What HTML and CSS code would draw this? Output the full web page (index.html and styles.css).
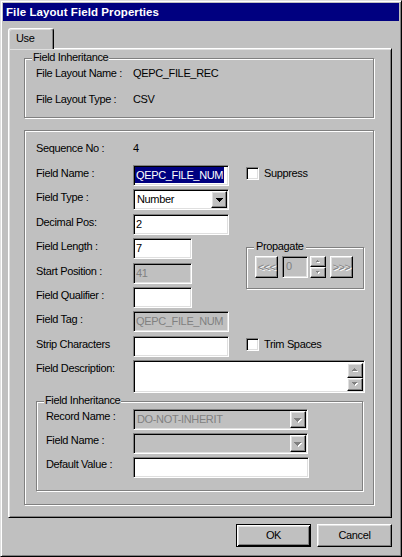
FILE: index.html
```html
<!DOCTYPE html>
<html>
<head>
<meta charset="utf-8">
<title>File Layout Field Properties</title>
<link rel="stylesheet" href="styles.css">
</head>
<body>
<div class="window">
  <div class="titlebar">File Layout Field Properties</div>
  <div class="client">
    <div class="tabstrip"><div class="tab">Use</div></div>
    <div class="panel">
      <div class="group g1">
        <span class="legend">Field Inheritance</span>
        <div class="info">
          <span>File Layout Name :</span><span>QEPC_FILE_REC</span>
          <span>File Layout Type :</span><span>CSV</span>
        </div>
      </div>

      <div class="group g2">
        <div class="form">
          <span class="lbl">Sequence No :</span>
          <span class="ctl val">4</span>

          <span class="lbl">Field Name :</span>
          <div class="ctl sunken edit w96 selwrap"><span class="sel">QEPC_FILE_NUM</span></div>
          <div class="side check"><span class="sunken box"></span><span>Suppress</span></div>

          <span class="lbl">Field Type :</span>
          <div class="ctl sunken combo w96"><span class="ctext">Number</span><span class="raised dropbtn"><svg width="7" height="4" viewBox="0 0 7 4" shape-rendering="crispEdges"><path d="M0 0h7v1H0zM1 1h5v1H1zM2 2h3v1H2zM3 3h1v1H3z" fill="#000"/></svg></span></div>

          <span class="lbl">Decimal Pos:</span>
          <div class="ctl sunken edit w96">2</div>

          <span class="lbl">Field Length :</span>
          <div class="ctl sunken edit w59">7</div>

          <div class="group prop">
            <span class="legend">Propagate</span>
            <div class="proprow">
              <span class="raised pbtn dis">&lt;&lt;&lt;</span>
              <span class="sunken pedit dis">0</span>
              <span class="spin">
                <span class="raised sbtn"><svg width="4" height="3" viewBox="0 0 4 3" shape-rendering="crispEdges"><path transform="translate(1 1)" fill="#fff" d="M1 0h1v1H1zM0 1h3v1H0z"/><path fill="#808080" d="M1 0h1v1H1zM0 1h3v1H0z"/></svg></span>
                <span class="raised sbtn"><svg width="4" height="3" viewBox="0 0 4 3" shape-rendering="crispEdges"><path transform="translate(1 1)" fill="#fff" d="M0 0h3v1H0zM1 1h1v1H1z"/><path fill="#808080" d="M0 0h3v1H0zM1 1h1v1H1z"/></svg></span>
              </span>
              <span class="raised pbtn dis">&gt;&gt;&gt;</span>
            </div>
          </div>

          <span class="lbl">Start Position :</span>
          <div class="ctl sunken edit w59 disabled">41</div>

          <span class="lbl">Field Qualifier :</span>
          <div class="ctl sunken edit w59"></div>

          <span class="lbl">Field Tag :</span>
          <div class="ctl sunken edit w96 disabled">QEPC_FILE_NUM</div>

          <span class="lbl">Strip Characters</span>
          <div class="ctl sunken edit w96"></div>
          <div class="side check"><span class="sunken box"></span><span>Trim Spaces</span></div>

          <span class="lbl">Field Description:</span>
          <div class="wide sunken memo">
            <div class="memotext"></div>
            <div class="vscroll">
              <span class="raised vbtn up"><svg width="6" height="4" viewBox="0 0 6 4" shape-rendering="crispEdges"><path transform="translate(1 1)" fill="#fff" d="M2 0h1v1H2zM1 1h3v1H1zM0 2h5v1H0z"/><path fill="#808080" d="M2 0h1v1H2zM1 1h3v1H1zM0 2h5v1H0z"/></svg></span>
              <span class="raised vbtn dn"><svg width="6" height="4" viewBox="0 0 6 4" shape-rendering="crispEdges"><path transform="translate(1 1)" fill="#fff" d="M0 0h5v1H0zM1 1h3v1H1zM2 2h1v1H2z"/><path fill="#808080" d="M0 0h5v1H0zM1 1h3v1H1zM2 2h1v1H2z"/></svg></span>
            </div>
          </div>
        </div>

        <div class="group g3">
          <span class="legend">Field Inheritance</span>
          <div class="form2">
            <span class="lbl2">Record Name :</span>
            <div class="sunken combo w175 disabled"><span class="ctext">DO-NOT-INHERIT</span><span class="raised dropbtn"><svg width="8" height="5" viewBox="0 0 8 5" shape-rendering="crispEdges"><path transform="translate(1 1)" fill="#fff" d="M0 0h7v1H0zM1 1h5v1H1zM2 2h3v1H2zM3 3h1v1H3z"/><path fill="#808080" d="M0 0h7v1H0zM1 1h5v1H1zM2 2h3v1H2zM3 3h1v1H3z"/></svg></span></div>

            <span class="lbl2">Field Name :</span>
            <div class="sunken combo w175 disabled"><span class="ctext"></span><span class="raised dropbtn"><svg width="8" height="5" viewBox="0 0 8 5" shape-rendering="crispEdges"><path transform="translate(1 1)" fill="#fff" d="M0 0h7v1H0zM1 1h5v1H1zM2 2h3v1H2zM3 3h1v1H3z"/><path fill="#808080" d="M0 0h7v1H0zM1 1h5v1H1zM2 2h3v1H2zM3 3h1v1H3z"/></svg></span></div>

            <span class="lbl2">Default Value :</span>
            <div class="sunken edit w176"></div>
          </div>
        </div>
      </div>
    </div>
    <div class="buttons">
      <span class="btn default">OK</span>
      <span class="btn raised">Cancel</span>
    </div>
  </div>
</div>
</body>
</html>
```
FILE: styles.css
```css
* { box-sizing: border-box; margin: 0; padding: 0; }
html, body { margin: 0; background: #c0c0c0; }
body {
  font: 11px/13px "Liberation Sans", Arial, sans-serif;
  letter-spacing: -0.35px;
  color: #000;
}

.window {
  width: 402px;
  height: 557px;
  border: 1px solid;
  border-color: #dfdfdf #000 #000 #dfdfdf;
  box-shadow: inset 1px 1px #fff, inset -1px -1px #808080;
  padding: 2px;
  display: flex;
  flex-direction: column;
  background: #c0c0c0;
}

.titlebar {
  height: 18px;
  flex: none;
  background: #000080;
  color: #fff;
  font-weight: bold;
  font-size: 11.5px;
  line-height: 18px;
  letter-spacing: 0.08px;
  padding-left: 3px;
  white-space: nowrap;
}

.client {
  flex: 1;
  display: flex;
  flex-direction: column;
  padding: 7px 7px 0 5px;
}

/* 3D helpers */
.raised {
  background: #c0c0c0;
  border: 1px solid;
  border-color: #fff #000 #000 #fff;
  box-shadow: inset -1px -1px #808080, inset 1px 1px #dfdfdf;
}
.sunken {
  background: #fff;
  border: 1px solid;
  border-color: #808080 #fff #fff #808080;
  box-shadow: inset 1px 1px #000, inset -1px -1px #dfdfdf;
}

/* tabs */
.tabstrip {
  height: 20px;
  display: flex;
  align-items: flex-end;
}
.tab {
  position: relative;
  z-index: 1;
  width: 46px;
  height: 21px;
  margin-bottom: -1px;
  background: #c0c0c0;
  border: 1px solid;
  border-bottom: none;
  border-color: #fff #000 transparent #fff;
  border-radius: 3px 3px 0 0;
  box-shadow: inset -1px 0 #808080, inset 1px 1px #dfdfdf;
  padding: 3px 0 0 7px;
}

.panel {
  width: 384px;
  height: 470px;
  border: 1px solid;
  border-color: #fff #000 #000 #fff;
  box-shadow: inset 1px 1px #dfdfdf, inset -1px -1px #808080;
  padding: 9px 0 0 15px;
}

/* group boxes (etched) */
.group {
  position: relative;
  border: 1px solid #808080;
  box-shadow: inset 1px 1px #fff, 1px 1px #fff;
}
.legend {
  position: absolute;
  top: -8px;
  left: 7px;
  padding: 0 1px;
  background: #c0c0c0;
  white-space: nowrap;
}

.g1 {
  width: 350px;
  height: 60px;
  padding: 8px 0 0 11px;
}
.info {
  display: grid;
  grid-template-columns: 97px auto;
  row-gap: 13px;
}

.g2 {
  width: 350px;
  height: 375px;
  margin-top: 12px;
  padding: 9px 0 0 11px;
}
.form {
  display: grid;
  grid-template-columns: 97px 113px 118px;
  grid-template-rows: 25px repeat(8, 24.4px) 33px;
}
.lbl { grid-column: 1; padding-top: 2px; white-space: nowrap; }
.ctl { grid-column: 2; }
.val { padding-top: 2px; }
.side { grid-column: 3; }
.wide { grid-column: 2 / 4; }

.edit {
  height: 21px;
  padding: 3px 2px 0;
  white-space: nowrap;
  overflow: hidden;
}
.w96 { width: 96px; }
.w59 { width: 59px; }
.w175 { width: 175px; }
.w176 { width: 176px; }
.disabled { background: #c0c0c0; color: #808080; }

.selwrap { padding: 1px 1px 0; }
.sel {
  display: inline-block;
  height: 16px;
  line-height: 16px;
  padding: 0 1px;
  background: #000080;
  color: #fff;
}

.combo {
  height: 21px;
  display: flex;
  align-items: flex-start;
  padding: 1px;
}
.ctext {
  flex: 1;
  padding: 2px 0 0 2px;
  white-space: nowrap;
}
.dropbtn {
  width: 16px;
  height: 17px;
  display: flex;
  align-items: center;
  justify-content: center;
  padding-top: 1px;
}

.check {
  display: flex;
  align-items: flex-start;
  gap: 5px;
  padding-top: 2px;
}
.box { width: 13px; height: 13px; flex: none; }

/* propagate */
.prop {
  grid-column: 3;
  grid-row: 5 / span 2;
  align-self: start;
  width: 118px;
  height: 42px;
  margin-top: 9px;
  padding: 8px 0 0 8px;
}
.prop .legend { padding: 0 2px; }
.proprow { display: flex; align-items: flex-start; }
.pbtn {
  width: 23px;
  height: 22px;
  display: flex;
  align-items: center;
  justify-content: center;
  letter-spacing: -0.6px;
}
.dis { color: #808080; text-shadow: 1px 1px #fff; }
.pedit {
  width: 26px;
  height: 22px;
  margin: 0 2px 0 4px;
  background: #c0c0c0;
  padding: 3px 0 0 3px;
  text-shadow: none;
}
.spin {
  display: flex;
  flex-direction: column;
  width: 16px;
  margin-right: 4px;
}
.sbtn {
  height: 11px;
  display: flex;
  align-items: center;
  justify-content: center;
}

/* memo */
.memo {
  width: 232px;
  height: 33px;
  display: flex;
  padding: 2px 1px 1px 2px;
}
.memotext { flex: 1; }
.vscroll {
  width: 16px;
  display: flex;
  flex-direction: column;
}
.vbtn {
  display: flex;
  align-items: center;
  justify-content: center;
}
.vbtn.up { height: 15px; }
.vbtn.dn { height: 14px; }

/* inner group */
.g3 {
  width: 327px;
  height: 90px;
  margin-top: 8px;
  padding: 7px 0 0 9px;
}
.form2 {
  display: grid;
  grid-template-columns: 87px auto;
  grid-auto-rows: 22px;
  row-gap: 2px;
}
.lbl2 { padding-top: 1px; white-space: nowrap; }

/* buttons */
.buttons {
  display: flex;
  justify-content: flex-end;
  gap: 6px;
  padding-top: 6px;
}
.btn {
  width: 75px;
  height: 23px;
  display: flex;
  align-items: center;
  justify-content: center;
}
.btn.default {
  background: #c0c0c0;
  border: 1px solid #000;
  box-shadow: inset 1px 1px #fff, inset -1px -1px #000, inset 2px 2px #dfdfdf, inset -2px -2px #808080;
}
```
